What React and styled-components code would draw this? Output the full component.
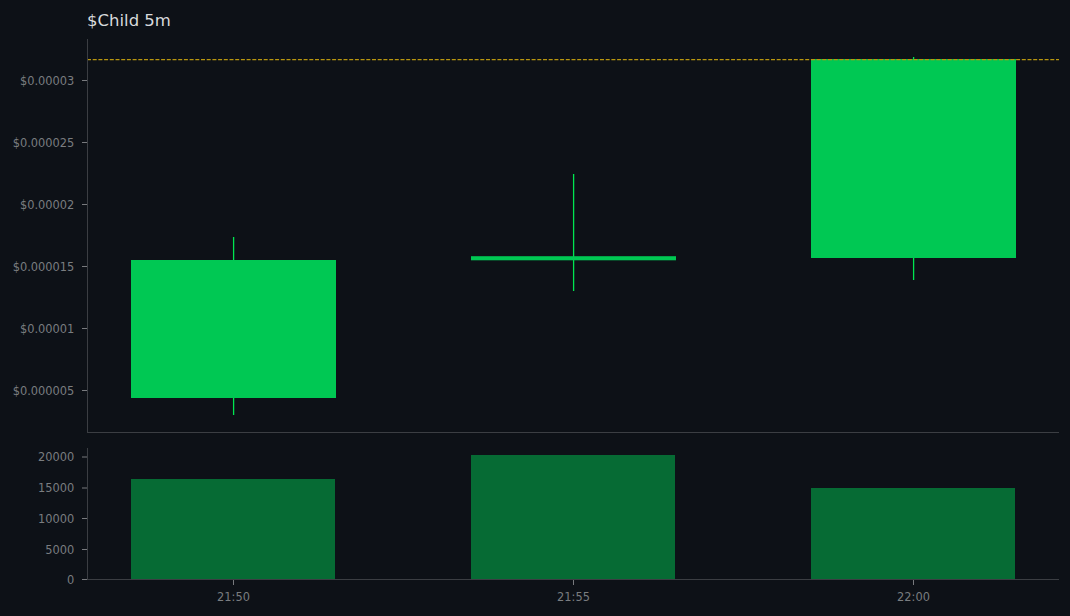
import React from "react";
import styled, { createGlobalStyle } from "styled-components";

const Global = createGlobalStyle`
  html, body { margin: 0; padding: 0; background: #0d1117; }
  #root { width: 1070px; height: 616px; overflow: hidden; }
`;

const Page = styled.main`
  width: 1070px;
  height: 616px;
  background: #0d1117;
  display: flex;
  flex-direction: column;
  font-family: "DejaVu Sans", sans-serif;
`;

const Title = styled.h1`
  margin: 0;
  padding: 11px 0 0 87px;
  height: 39px;
  box-sizing: border-box;
  font-size: 16.5px;
  line-height: 20px;
  font-weight: 400;
  color: #d8dadc;
`;

const Pane = styled.svg`
  display: block;
  width: 1070px;
  height: ${(p) => p.$h}px;
  margin-bottom: ${(p) => p.$gap || 0}px;
  flex: none;
`;

const Label = styled.text`
  font-family: "DejaVu Sans", sans-serif;
  font-size: 11.4px;
  fill: #7a7d80;
`;

const AXIS = "#3b3e43";
const TICK = "#85878a";
const GREEN = "#00e650";

const priceTicks = [
  ["$0.00003", 41.5],
  ["$0.000025", 103.5],
  ["$0.00002", 165.5],
  ["$0.000015", 227.5],
  ["$0.00001", 289.5],
  ["$0.000005", 351.5],
];
const candles = [
  { x: 131, w: 205, top: 221, bottom: 359, wx: 233.6, wt: 198, wb: 376 },
  { x: 471, w: 205, top: 217.2, bottom: 221.3, wx: 573.6, wt: 135, wb: 252 },
  { x: 811, w: 205, top: 20, bottom: 219, wx: 913.6, wt: 18, wb: 241 },
];
const volTicks = [
  ["20000", 9],
  ["15000", 40],
  ["10000", 70.5],
  ["5000", 101.5],
  ["0", 131.5],
];
const volBars = [
  { x: 131, w: 204, top: 31 },
  { x: 471, w: 204, top: 7 },
  { x: 811, w: 204, top: 40 },
];
const times = [["21:50", 233.5], ["21:55", 573.5], ["22:00", 913.5]];

function PriceChart() {
  return (
    <Pane $h={394} $gap={15} viewBox="0 0 1070 394">
      {candles.map((c) => (
        <g key={c.x}>
          <line x1={c.wx} x2={c.wx} y1={c.wt} y2={c.wb} stroke={GREEN} strokeWidth="1.3" />
          <rect x={c.x} y={c.top} width={c.w} height={c.bottom - c.top} fill="#00c853" />
        </g>
      ))}
      <line x1="87" x2="1059" y1="20.6" y2="20.6" stroke="#b8960f" strokeWidth="1.4" strokeDasharray="4 1.7" />
      <line x1="87.5" x2="87.5" y1="0" y2="393.5" stroke={AXIS} />
      <line x1="87" x2="1059" y1="393.5" y2="393.5" stroke={AXIS} />
      {priceTicks.map(([t, y]) => (
        <g key={t}>
          <line x1="82" x2="87" y1={y} y2={y} stroke={TICK} strokeWidth="0.9" />
          <Label x="74.3" y={y + 4} textAnchor="end">{t}</Label>
        </g>
      ))}
    </Pane>
  );
}

function VolumeChart() {
  return (
    <Pane $h={168} viewBox="0 0 1070 168">
      {volBars.map((b) => (
        <rect key={b.x} x={b.x} y={b.top} width={b.w} height={131 - b.top} fill="#066b34" />
      ))}
      <line x1="87.5" x2="87.5" y1="0" y2="131.5" stroke={AXIS} />
      <line x1="87" x2="1059" y1="131.5" y2="131.5" stroke={AXIS} />
      {volTicks.map(([t, y]) => (
        <g key={t}>
          <line x1="82" x2="87" y1={y} y2={y} stroke={TICK} strokeWidth="0.9" />
          <Label x="74.3" y={y + 4} textAnchor="end">{t}</Label>
        </g>
      ))}
      {times.map(([t, x]) => (
        <g key={t}>
          <line x1={x} x2={x} y1="132" y2="137" stroke={TICK} strokeWidth="0.9" />
          <Label x={x} y="152.5" textAnchor="middle">{t}</Label>
        </g>
      ))}
    </Pane>
  );
}

export default function App() {
  return (
    <Page>
      <Global />
      <Title>$Child 5m</Title>
      <PriceChart />
      <VolumeChart />
    </Page>
  );
}
